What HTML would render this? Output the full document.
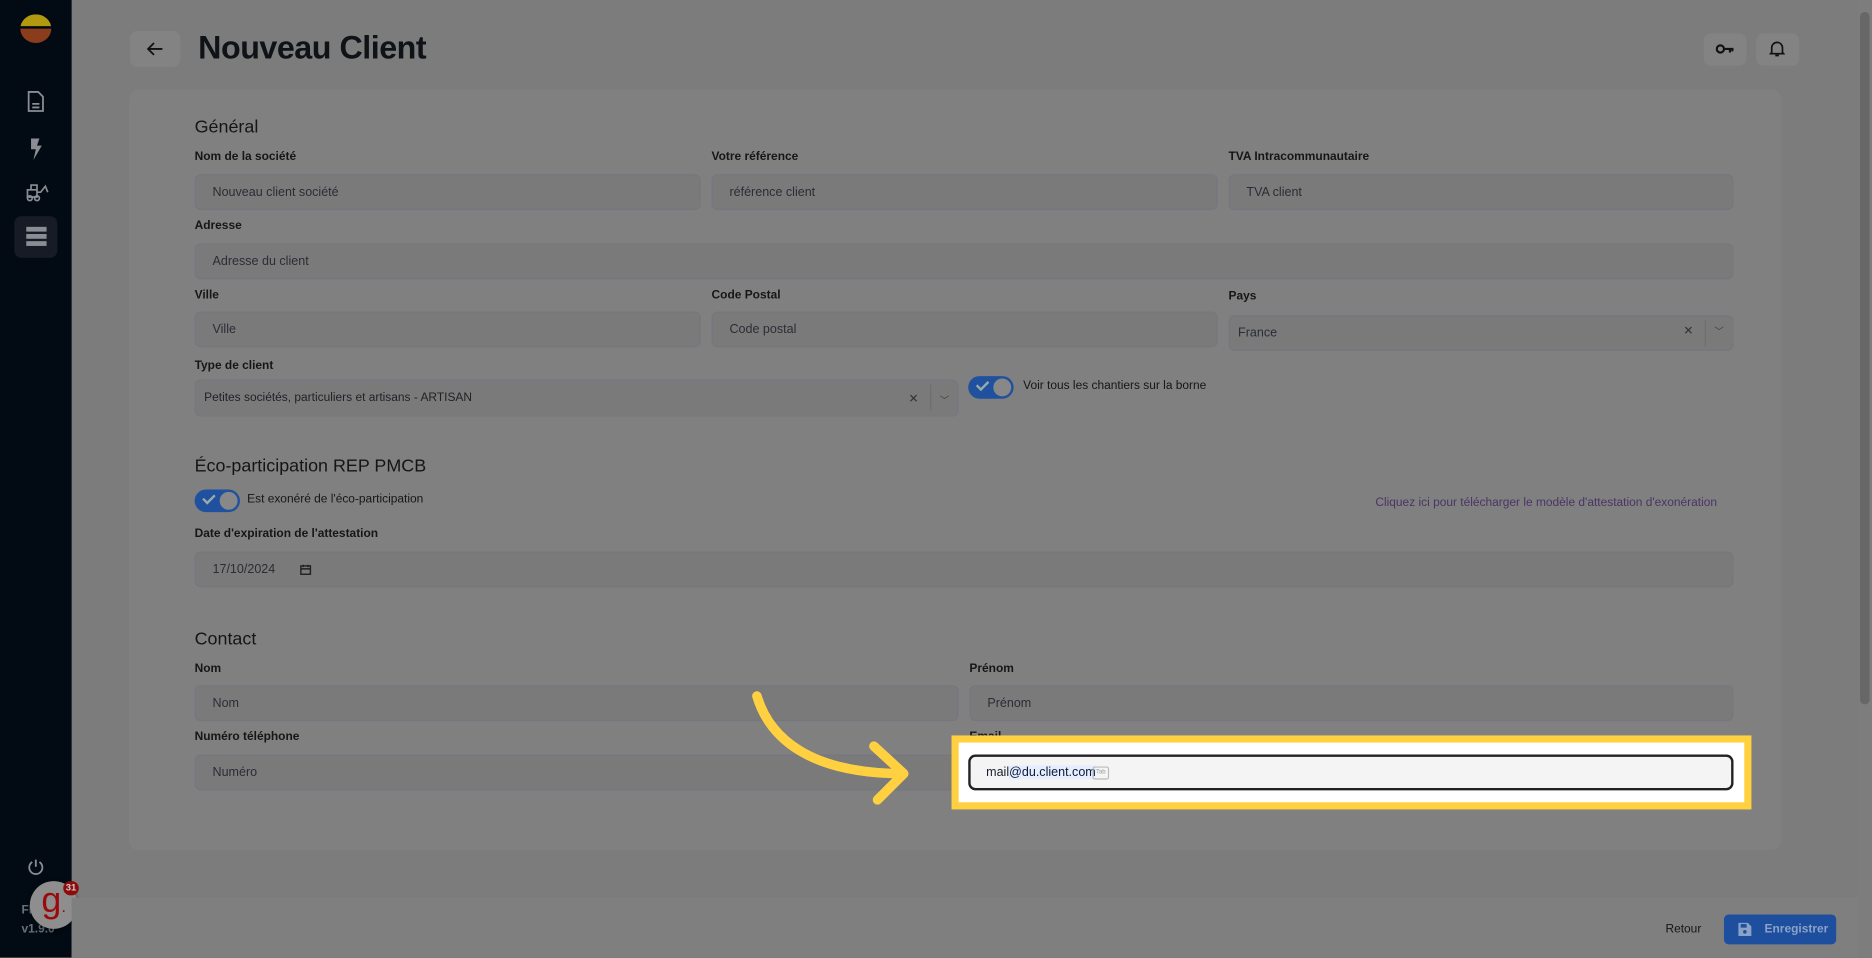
<!DOCTYPE html>
<html><head><meta charset="utf-8"><style>
html,body{margin:0;padding:0;width:1872px;height:957px;overflow:hidden;background:#7b7b7b;font-family:"Liberation Sans",sans-serif}
#s{position:absolute;left:0;top:0;width:1568px;height:802px;transform:scale(1.19388);transform-origin:0 0;background:#7c7c7c}
.a{position:absolute}
.lbl{position:absolute;font-size:10px;font-weight:bold;color:#161616}
.in{position:absolute;background:#7a7a7b;border:1px solid #76767f;border-radius:5px;box-sizing:border-box;font-size:10.5px;color:#2a2d33;padding-left:14px;display:flex;align-items:center}
.h{position:absolute;font-size:15px;color:#151515;font-weight:500}
.tg{position:absolute;width:38px;height:19px;border-radius:10px;background:#20519e}
.tg:after{content:"";position:absolute;right:2px;top:2px;width:15px;height:15px;border-radius:50%;background:#888}
.tg:before{content:"";position:absolute;left:7px;top:4px;width:8px;height:4px;border-left:2px solid #9aa;border-bottom:2px solid #9aa;transform:rotate(-45deg)}
.t{position:absolute;font-size:10px;color:#161616}
</style></head><body><div id="s">
<div class="a" style="left:0;top:0;width:60px;height:802px;background:#020b14"></div>
<div class="a" style="left:17px;top:12px;width:26px;height:24px;border-radius:50%;overflow:hidden">
<div style="height:10px;background:#b29a10"></div><div style="height:2px;background:#020b14"></div><div style="height:12px;background:#8a3c1c"></div></div>
<svg class="a" style="left:22px;top:76px" width="16" height="18" viewBox="0 0 16 18" fill="none" stroke="#8a8e94" stroke-width="1.5"><path d="M2 1h8l4 4v12H2z"/><path d="M5 11h6M5 14h6"/></svg>
<svg class="a" style="left:24px;top:116px" width="12" height="18" viewBox="0 0 12 18"><path d="M2 0h7L7 6h4L4 18l2-9H2z" fill="#8a8e94"/></svg>
<svg class="a" style="left:21px;top:153px" width="20" height="16" viewBox="0 0 20 16" fill="none" stroke="#8a8e94" stroke-width="1.4"><path d="M2 6h8v6H2zM5 6V2h5v4M10 8h3l4-5 2 5"/><circle cx="4" cy="13" r="2"/><circle cx="10" cy="13" r="2"/></svg>
<div class="a" style="left:12px;top:181px;width:36px;height:35px;background:#161b26;border-radius:6px"></div>
<div class="a" style="left:22px;top:190px;width:17px;height:4px;background:#8a8e94"></div>
<div class="a" style="left:22px;top:196px;width:17px;height:4px;background:#8a8e94"></div>
<div class="a" style="left:22px;top:202px;width:17px;height:4px;background:#8a8e94"></div>
<svg class="a" style="left:23px;top:719px" width="14" height="14" viewBox="0 0 14 14" fill="none" stroke="#8a8e94" stroke-width="1.5"><path d="M4 3a5.5 5.5 0 1 0 6 0M7 1v6"/></svg>
<div class="a" style="left:18px;top:757px;font-size:10px;color:#6a7078;font-weight:bold">FR</div>
<div class="a" style="left:18px;top:773px;font-size:10px;color:#6a7078;font-weight:bold">v1.9.0</div>
<div class="a" style="left:25px;top:738px;width:40px;height:40px;border-radius:50%;background:#8e8e8e;box-shadow:0 1px 4px rgba(0,0,0,.5);color:#9b0a0a;font-size:30px;text-align:center;line-height:34px">g<span style="font-size:14px">.</span></div>
<div class="a" style="left:53px;top:738px;width:13px;height:12px;border-radius:6px;background:#8f0b0b;color:#ccc;font-size:8px;text-align:center;line-height:12px;font-weight:bold">31</div>

<div class="a" style="left:109px;top:26px;width:42px;height:30px;background:#838383;border-radius:6px"></div>
<svg class="a" style="left:123px;top:35px" width="14" height="12" viewBox="0 0 14 12" fill="none" stroke="#111" stroke-width="1.5"><path d="M13 6H1M6 1L1 6l5 5"/></svg>
<div class="a" style="left:166px;top:25px;font-size:27px;font-weight:600;color:#0f1217;letter-spacing:-.4px">Nouveau Client</div>
<div class="a" style="left:1427px;top:28px;width:36px;height:27px;background:#838383;border-radius:6px"></div>
<div class="a" style="left:1471px;top:28px;width:36px;height:27px;background:#838383;border-radius:6px"></div>
<svg class="a" style="left:1437px;top:36px" width="16" height="10" viewBox="0 0 16 10" fill="none" stroke="#111" stroke-width="1.8"><circle cx="4" cy="5" r="3"/><path d="M7 5h8M12 5v3M14 5v2"/></svg>
<svg class="a" style="left:1482px;top:34px" width="13" height="14" viewBox="0 0 13 14" fill="none" stroke="#111" stroke-width="1.4"><path d="M2 10V6a4.5 4.5 0 0 1 9 0v4l1 1H1zM5 12.5h3"/></svg>

<div class="a" style="left:108px;top:75px;width:1384px;height:637px;background:#808080;border-radius:8px"></div>
<div class="h" style="left:163px;top:98px">Général</div>
<div class="lbl" style="left:163px;top:126px">Nom de la société</div>
<div class="lbl" style="left:596px;top:126px">Votre référence</div>
<div class="lbl" style="left:1029px;top:126px">TVA Intracommunautaire</div>
<div class="in" style="left:163px;top:146px;width:424px;height:30px">Nouveau client société</div>
<div class="in" style="left:596px;top:146px;width:424px;height:30px">référence client</div>
<div class="in" style="left:1029px;top:146px;width:423px;height:30px">TVA client</div>
<div class="lbl" style="left:163px;top:184px">Adresse</div>
<div class="in" style="left:163px;top:204px;width:1289px;height:30px">Adresse du client</div>
<div class="lbl" style="left:163px;top:242px">Ville</div>
<div class="lbl" style="left:596px;top:242px">Code Postal</div>
<div class="lbl" style="left:1029px;top:243px">Pays</div>
<div class="in" style="left:163px;top:261px;width:424px;height:30px">Ville</div>
<div class="in" style="left:596px;top:261px;width:424px;height:30px">Code postal</div>
<div class="in" style="left:1029px;top:264px;width:423px;height:30px;padding-left:7px">France</div>
<div class="t" style="left:1410px;top:272px;color:#333">✕</div>
<div class="a" style="left:1428px;top:268px;width:1px;height:22px;background:#6e6e6e"></div>
<div class="t" style="left:1436px;top:272px;color:#444;font-size:8px">﹀</div>
<div class="lbl" style="left:163px;top:301px">Type de client</div>
<div class="in" style="left:163px;top:318px;width:640px;height:31px;padding-left:7px;font-size:10px;color:#1e2125">Petites sociétés, particuliers et artisans - ARTISAN</div>
<div class="t" style="left:761px;top:329px;color:#333">✕</div>
<div class="a" style="left:779px;top:322px;width:1px;height:22px;background:#6e6e6e"></div>
<div class="t" style="left:787px;top:330px;color:#444;font-size:8px">﹀</div>
<div class="tg" style="left:811px;top:315px"></div>
<div class="t" style="left:857px;top:318px">Voir tous les chantiers sur la borne</div>

<div class="h" style="left:163px;top:382px">Éco-participation REP PMCB</div>
<div class="tg" style="left:163px;top:410px"></div>
<div class="t" style="left:207px;top:413px">Est exonéré de l'éco-participation</div>
<div class="t" style="left:1152px;top:416px;color:#4a3466">Cliquez ici pour télécharger le modèle d'attestation d'exonération</div>
<div class="lbl" style="left:163px;top:442px">Date d'expiration de l'attestation</div>
<div class="in" style="left:163px;top:462px;width:1289px;height:30px">17/10/2024</div>
<svg class="a" style="left:251px;top:472px" width="10" height="10" viewBox="0 0 10 10" fill="none" stroke="#222" stroke-width="1.2"><rect x="1" y="2" width="8" height="7"/><path d="M1 4.5h8M3 1v2M7 1v2"/></svg>

<div class="h" style="left:163px;top:527px">Contact</div>
<div class="lbl" style="left:163px;top:555px">Nom</div>
<div class="lbl" style="left:812px;top:555px">Prénom</div>
<div class="in" style="left:163px;top:574px;width:640px;height:30px">Nom</div>
<div class="in" style="left:812px;top:574px;width:640px;height:30px">Prénom</div>
<div class="lbl" style="left:163px;top:612px">Numéro téléphone</div>
<div class="lbl" style="left:812px;top:612px">Email</div>
<div class="in" style="left:163px;top:632px;width:640px;height:30px">Numéro</div>

<div class="a" style="left:797px;top:616px;width:670px;height:62px;background:#ffd140"></div>
<div class="a" style="left:803px;top:622px;width:658px;height:50px;background:#fff"></div>
<div class="a" style="left:811px;top:632px;width:641px;height:30px;box-sizing:border-box;background:#f4f4f4;border:2px solid #222;border-radius:6px"></div>
<div class="a" style="left:826px;top:641px;font-size:10.5px;color:#1a1f2a">mail<span style="background:#e6eefc;color:#0a1a40">@du.client.com</span></div>
<div class="a" style="left:915px;top:642px;width:12px;height:9px;border:1px solid #bbb;font-size:5px;color:#999;line-height:9px;text-align:center;border-radius:2px">Tab</div>

<svg class="a" style="left:625px;top:575px" width="145" height="105" viewBox="0 0 145 105" fill="none" stroke="#ffd140" stroke-width="8" stroke-linecap="round" stroke-linejoin="round"><path d="M9 8C20 45 55 72 128 73"/><path d="M107 50L132 73 110 95"/></svg>

<div class="a" style="left:60px;top:752px;width:1496px;height:50px;background:#7f7f7f"></div>
<div class="a" style="left:1395px;top:773px;font-size:10px;color:#161616">Retour</div>
<div class="a" style="left:1444px;top:766px;width:94px;height:25px;background:#1e4f9e;border-radius:4px"></div>
<svg class="a" style="left:1456px;top:772px" width="11" height="12" viewBox="0 0 11 12"><path d="M0 1h8l3 3v8H0z" fill="#8ba2c8"/><rect x="2" y="2" width="5" height="3" fill="#1e4f9e"/><circle cx="5.5" cy="8.5" r="1.5" fill="#1e4f9e"/></svg>
<div class="a" style="left:1478px;top:773px;font-size:10px;color:#8ba2c8;font-weight:bold">Enregistrer</div>
<div class="a" style="left:1556px;top:0;width:12px;height:802px;background:#7d7d7d"></div>
<div class="a" style="left:1558px;top:10px;width:8px;height:580px;background:#676767;border-radius:4px"></div>
</div></body></html>
